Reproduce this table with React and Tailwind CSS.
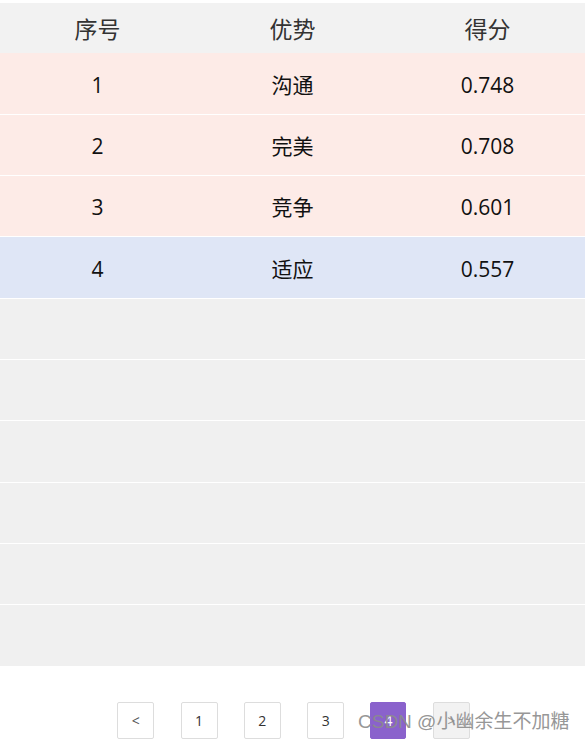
const rows = [
  { id: 1, name: "沟通", score: "0.748", tone: "pink" },
  { id: 2, name: "完美", score: "0.708", tone: "pink" },
  { id: 3, name: "竞争", score: "0.601", tone: "pink" },
  { id: 4, name: "适应", score: "0.557", tone: "blue" },
];

const emptyRows = [5, 6, 7, 8, 9, 10];

const font = "font-['Segoe_UI','Open_Sans','Noto_Sans_CJK_SC',sans-serif]";

export default function App() {
  return (
    <div className={`relative h-[742px] w-[585px] overflow-hidden bg-white pt-[3px] ${font}`}>
      <div className="grid h-[50.3px] grid-cols-3 items-center bg-[#f2f2f2] pt-[2px] text-[23px] text-[#333]">
        <div className="text-center">序号</div>
        <div className="text-center">优势</div>
        <div className="text-center">得分</div>
      </div>

      {rows.map((row) => (
        <div
          key={row.id}
          className={`grid h-[61.33px] grid-cols-3 items-center border-b-[1.3px] border-white pt-[4px] text-[21px] text-[#111] ${
            row.tone === "pink" ? "bg-[#fdebe7]" : "bg-[#dfe6f6]"
          }`}
        >
          <div className="text-center">{row.id}</div>
          <div className="text-center">{row.name}</div>
          <div className="text-center">{row.score}</div>
        </div>
      ))}

      {emptyRows.map((n) => (
        <div key={n} className="h-[61.33px] border-b-[1.3px] border-white bg-[#f0f0f0]" />
      ))}

      <div className="mt-[35px] flex justify-center gap-[26.3px] pl-[2px] text-[14px]">
        <button className="flex h-[37px] w-[37px] items-center justify-center rounded-[2px] border border-[#ddd] bg-white text-[#555]">
          &lt;
        </button>
        {[1, 2, 3].map((p) => (
          <button
            key={p}
            className="flex h-[37px] w-[37px] items-center justify-center rounded-[2px] border border-[#ddd] bg-white text-[#333]"
          >
            {p}
          </button>
        ))}
        <button className="flex h-[37px] w-[36px] items-center justify-center rounded-[2px] border border-[#8a62cc] bg-[#8a62cc] text-white">
          4
        </button>
        <button className="flex h-[37px] w-[37px] items-center justify-center rounded-[2px] border border-[#ddd] bg-[#f2f2f2] text-[#999]">
          &gt;
        </button>
      </div>

      <div className="pointer-events-none absolute left-[358px] top-[707px] whitespace-nowrap text-[19px] leading-[30px] text-[#8c8c8c] opacity-90 font-['Liberation_Sans','Noto_Sans_CJK_SC',sans-serif]">
        CSDN @小幽余生不加糖
      </div>
    </div>
  );
}
